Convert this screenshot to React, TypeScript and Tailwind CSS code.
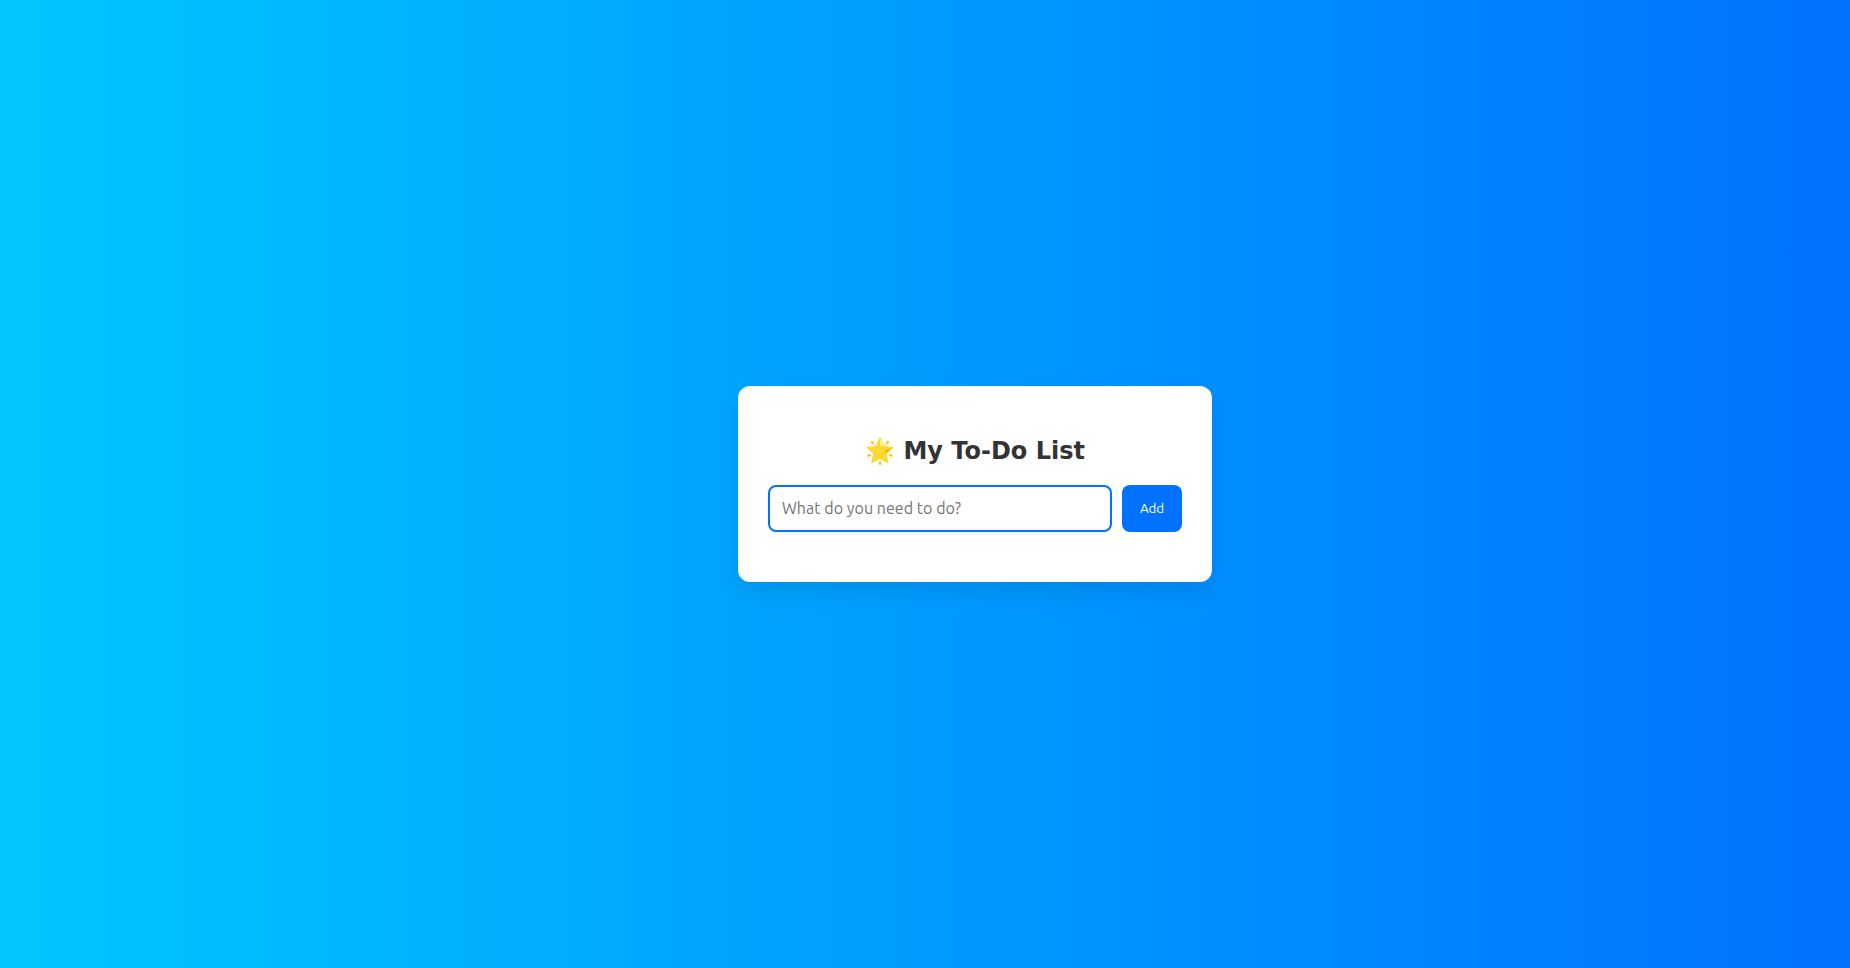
export default function App() {
  return (
    <div className="min-h-screen flex items-center justify-center bg-[linear-gradient(to_right,#00c6ff,#0072ff)] font-['DejaVu_Sans',sans-serif]">
      <div className="ml-[100px] w-[474px] rounded-xl bg-white p-[30px] shadow-[0_10px_25px_rgba(0,0,0,0.1)]">
        <h1 className="mt-[21px] mb-5 text-center text-2xl leading-7 font-bold text-[#333]">🌟 My To-Do List</h1>
        <div className="flex gap-2.5 pb-5">
          <input
            placeholder="What do you need to do?"
            className="h-[47px] min-w-0 flex-1 rounded-lg border-2 border-[#0072ff] bg-white pr-3 pb-0.5 pl-3 font-['Ubuntu',sans-serif] text-base tracking-[0.04px] text-[#333] outline-none placeholder:text-[#757575]"
          />
          <button className="h-[47px] w-[60px] rounded-lg bg-[#0072ff] font-['Ubuntu',sans-serif] text-[13.33px] text-white">Add</button>
        </div>
      </div>
    </div>
  );
}
